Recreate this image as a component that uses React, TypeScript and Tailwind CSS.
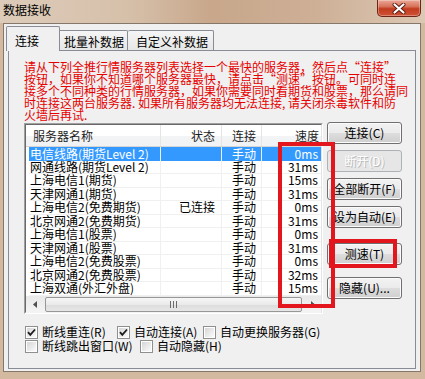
import React from 'react';

type Row = { name: string; status?: string; speed: string; selected?: boolean };

const rows: Row[] = [
  { name: '电信线路(期货Level 2)', speed: '0ms', selected: true },
  { name: '网通线路(期货Level 2)', speed: '31ms' },
  { name: '上海电信1(期货)', speed: '15ms' },
  { name: '天津网通1(期货)', speed: '31ms' },
  { name: '上海电信2(免费期货)', status: '已连接', speed: '0ms' },
  { name: '北京网通2(免费期货)', speed: '31ms' },
  { name: '上海电信1(股票)', speed: '0ms' },
  { name: '天津网通1(股票)', speed: '31ms' },
  { name: '上海电信2(免费股票)', speed: '0ms' },
  { name: '北京网通2(免费股票)', speed: '32ms' },
  { name: '上海双通(外汇外盘)', speed: '15ms' },
];

// half-width punctuation cell, SimSun style
function Half({ ch }: { ch: string }) {
  return <span className="inline-block w-[6px]">{ch}</span>;
}

function CloseButton() {
  return (
    <div className="mr-[4px] flex h-[17px] w-[44px] items-center justify-center rounded-b-[5px] border border-t-0 border-[#6e2416] bg-[linear-gradient(180deg,#eba896_0%,#d8745c_40%,#c23b1f_55%,#cf5437_100%)] shadow-[inset_0_0_0_1px_rgba(255,255,255,0.3)]">
      <svg width="14" height="11" viewBox="0 0 14 11" aria-hidden>
        <path d="M2.5 1.5 L11.5 9.5 M11.5 1.5 L2.5 9.5" stroke="#5a1a10" strokeWidth="4" strokeLinecap="round" />
        <path d="M2.5 1.5 L11.5 9.5 M11.5 1.5 L2.5 9.5" stroke="#ffffff" strokeWidth="2.2" strokeLinecap="round" />
      </svg>
    </div>
  );
}

function Check({ checked }: { checked?: boolean }) {
  return (
    <span className="flex h-[13px] w-[13px] shrink-0 items-center justify-center border border-[#8e8f8f] bg-white p-[1px]">
      <span className="flex h-full w-full items-center justify-center bg-[linear-gradient(135deg,#d6d6d6,#fbfbfb)]">
        {checked && (
          <svg width="9" height="9" viewBox="0 0 9 9" aria-hidden>
            <path d="M1 4.2 L3.3 6.8 L8 1.5" stroke="#1c1c1c" strokeWidth="1.8" fill="none" />
          </svg>
        )}
      </span>
    </span>
  );
}

function Btn({ label, disabled }: { label: string; disabled?: boolean }) {
  return (
    <div
      className={
        disabled
          ? 'flex h-[22px] w-[75px] items-center justify-center overflow-hidden whitespace-nowrap rounded-[3px] border border-[#adb2b5] bg-[#e6e6e6] text-white [text-shadow:1px_1px_0_#b8b8b8]'
          : 'flex h-[22px] w-[75px] items-center justify-center overflow-hidden whitespace-nowrap rounded-[3px] border border-[#707070] bg-[linear-gradient(180deg,#f2f2f2_0%,#ebebeb_50%,#dddddd_51%,#cfcfcf_100%)] shadow-[inset_0_0_0_1px_#fbfbfb]'
      }
    >
      {label}
    </div>
  );
}

function ListView() {
  return (
    <div className="h-[191px] w-[299px] border-[1px] border-t-[#a0a0a0] border-l-[#a0a0a0] border-b-white border-r-white">
      <div className="flex h-full w-full flex-col border-[1px] border-t-[#696969] border-l-[#696969] border-b-[#e3e3e3] border-r-[#e3e3e3] bg-white">
        {/* header */}
        <div className="flex h-[22px] shrink-0 items-center border-b border-[#d5d5d5] bg-[linear-gradient(180deg,#ffffff_0%,#ffffff_50%,#f3f4f6_51%,#f1f2f4_100%)] text-[#1e1e1e]">
          <div className="flex h-full w-[135px] items-center border-r border-[#e5e5e5] pl-[7px]">服务器名称</div>
          <div className="flex h-full w-[61px] items-center justify-end border-r border-[#e5e5e5] pr-[6px]">状态</div>
          <div className="flex h-full w-[40px] items-center border-r border-[#e5e5e5] pl-[10px]">连接</div>
          <div className="flex h-full flex-1 items-center justify-end pr-[2px]">速度</div>
        </div>
        {/* rows */}
        <div className="flex-1">
          {rows.map((r) => (
            <div key={r.name} className="flex h-[13.5px] pl-[3px]">
              <div
                className={
                  r.selected
                    ? 'flex h-full flex-1 items-center bg-[#3399ff] text-white'
                    : 'flex h-full flex-1 items-center border-b border-[#f0f0f0] text-black'
                }
              >
                <div className="flex h-full w-[132px] items-center whitespace-nowrap border-r border-[#f0f0f0] pl-[1px]">{r.name}</div>
                <div className="flex h-full w-[61px] items-center justify-end whitespace-nowrap border-r border-[#f0f0f0] pr-[6px]">{r.status ?? ''}</div>
                <div className="flex h-full w-[40px] items-center border-r border-[#f0f0f0] pl-[10px]">手动</div>
                <div className="flex h-full flex-1 items-center justify-end pr-[3px]">{r.speed}</div>
              </div>
            </div>
          ))}
        </div>
        {/* horizontal scrollbar */}
        <div className="flex h-[17px] shrink-0 items-center bg-[linear-gradient(180deg,#e9e9e9,#f4f4f4)]">
          <div className="flex h-full w-[17px] items-center justify-center">
            <svg width="4" height="7" viewBox="0 0 4 7" aria-hidden>
              <path d="M4 0 L0 3.5 L4 7 Z" fill="#505050" />
            </svg>
          </div>
          <div className="mx-[2px] flex h-[15px] flex-1 items-center justify-center rounded-[2px] border border-[#979797] bg-[linear-gradient(180deg,#f6f6f6_0%,#eaeaea_50%,#dcdcdc_51%,#e6e6e6_100%)]">
            <svg width="7" height="7" viewBox="0 0 7 7" aria-hidden>
              <path d="M0.5 0 V7 M3.5 0 V7 M6.5 0 V7" stroke="#6a6a6a" strokeWidth="1" />
            </svg>
          </div>
          <div className="flex h-full w-[17px] items-center justify-center">
            <svg width="4" height="7" viewBox="0 0 4 7" aria-hidden>
              <path d="M0 0 L4 3.5 L0 7 Z" fill="#505050" />
            </svg>
          </div>
        </div>
      </div>
    </div>
  );
}

export default function App() {
  return (
    <div
      lang="zh-CN"
      className="relative flex h-[379px] w-[425px] flex-col overflow-hidden bg-[#d2b99f] font-['Noto_Sans_CJK_SC','Noto_Sans',sans-serif] text-[12px] leading-[12px] text-black"
    >
      {/* title bar */}
      <div className="flex h-[23px] shrink-0 items-start justify-between bg-[linear-gradient(90deg,#ddcbb9_0%,#d6c0aa_30%,#c8a78b_50%,#ceb097_75%,#dcc8b4_100%)]">
        <span className="pl-[3px] pt-[4px]">数据接收</span>
        <CloseButton />
      </div>

      {/* client area */}
      <div className="mb-[7px] ml-[3px] mr-[4px] flex flex-1 flex-col border border-[#85786b] bg-[#f0f0f0] px-[4px] pb-[2px] pt-[2px]">
        {/* tabs */}
        <div className="flex h-[24px] shrink-0 items-end">
          <div className="relative z-10 -mb-px -ml-[2px] flex h-[25px] w-[54px] items-start rounded-t-[2px] border border-b-0 border-[#898c95] bg-[#f0f0f0] pl-[8px] pt-[8px]">
            连接
          </div>
          <div className="flex h-[20px] w-[68px] items-start rounded-tr-[2px] border-r border-t border-[#898c95] bg-[linear-gradient(180deg,#f5f5f5,#e6e6e6)] pl-[4px] pt-[5px]">
            批量补数据
          </div>
          <div className="flex h-[20px] w-[86px] items-start rounded-t-[2px] border-r border-t border-[#898c95] bg-[linear-gradient(180deg,#f5f5f5,#e6e6e6)] pl-[8px] pt-[5px]">
            自定义补数据
          </div>
        </div>

        {/* tab page */}
        <div className="flex flex-1 flex-col border border-[#898c95] bg-[#f0f0f0] pl-[15px] pt-[10px]">
          <div className="whitespace-nowrap text-[#e60000]">
            <div>请从下列全推行情服务器列表选择一个最快的服务器，然后点“连接”</div>
            <div>按钮，如果你不知道哪个服务器最快，请点击“测速”按钮。可同时连</div>
            <div>接多个不同种类的行情服务器，如果你需要同时看期货和股票，那么请同</div>
            <div>
              时连接这两台服务器<Half ch="." />如果所有服务器均无法连接<Half ch="," />请关闭杀毒软件和防
            </div>
            <div>火墙后再试.</div>
          </div>

          <div className="mt-[2px] flex items-start">
            <ListView />
            <div className="-mt-px ml-[4px] flex flex-col">
              <Btn label="连接(C)" />
              <div className="mt-[6px]">
                <Btn label="断开(D)" disabled />
              </div>
              <div className="mt-[6px]">
                <Btn label="全部断开(F)" />
              </div>
              <div className="mt-[6px]">
                <Btn label="设为自动(E)" />
              </div>
              <div className="mt-[15px]">
                <Btn label="测速(T)" />
              </div>
              <div className="mt-[12px]">
                <Btn label="隐藏(U)..." />
              </div>
            </div>
          </div>

          {/* options */}
          <div className="ml-[1px] mt-[11px] flex flex-col">
            <div className="flex h-[14px] items-center">
              <label className="flex w-[92px] items-center gap-[4px] whitespace-nowrap">
                <Check checked />
                断线重连(R)
              </label>
              <label className="flex w-[86px] items-center gap-[4px] whitespace-nowrap">
                <Check checked />
                自动连接(A)
              </label>
              <label className="flex items-center gap-[4px] whitespace-nowrap">
                <Check />
                自动更换服务器(G)
              </label>
            </div>
            <div className="flex h-[14px] items-center">
              <label className="flex w-[115px] items-center gap-[4px] whitespace-nowrap">
                <Check />
                断线跳出窗口(W)
              </label>
              <label className="flex items-center gap-[4px] whitespace-nowrap">
                <Check />
                自动隐藏(H)
              </label>
            </div>
          </div>
        </div>
      </div>

      {/* red highlight marks drawn over the dialog */}
      <div className="pointer-events-none absolute left-[278px] top-[142px] h-[166px] w-[57px] border-[4px] border-[#e3161d]" />
      <div className="pointer-events-none absolute left-[329px] top-[239px] h-[29px] w-[68px] border-[4px] border-[#e3161d]" />
    </div>
  );
}
